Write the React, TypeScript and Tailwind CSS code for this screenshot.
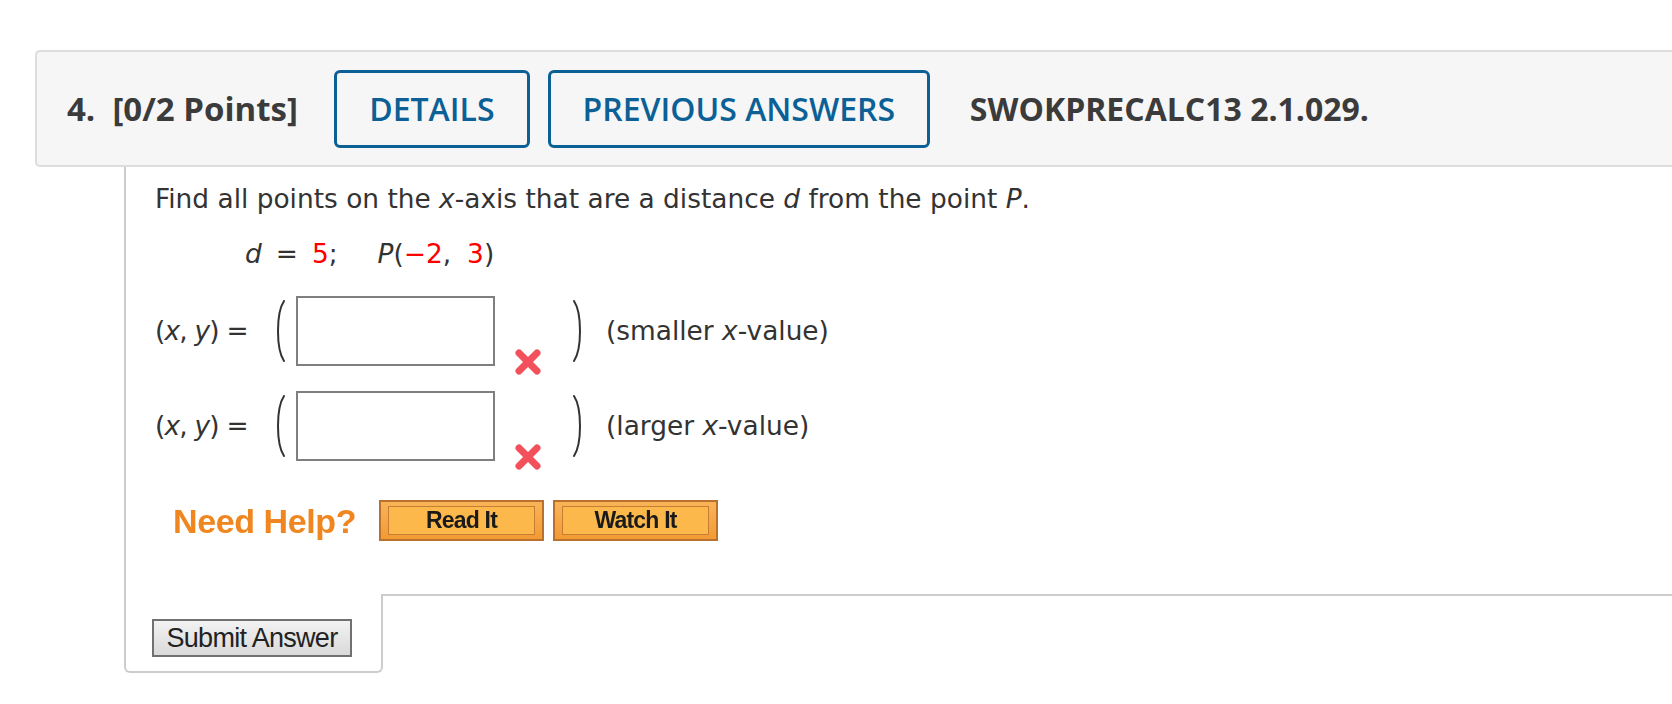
export default function App() {
  return (
    <div className="w-[1672px] h-[704px] bg-white overflow-hidden">
      <Header />
      <div className="ml-[124px]">
        <Question />
        <div className="flex">
          <div className="w-[259px] h-[79px] border-l-2 border-r-2 border-b-2 border-[#cccccc] rounded-b-[6px] pl-[26px] pt-[25px]">
            <button
              type="button"
              className="w-[200px] h-[38px] border-2 border-[#717171] bg-gradient-to-b from-[#f2f2f2] to-[#dadada] text-[27px] leading-none text-[#222222] [font-family:'Liberation_Sans',Arial,sans-serif] tracking-[-0.7px]"
            >
              Submit Answer
            </button>
          </div>
          <div className="flex-1 border-t-2 border-[#cccccc]" />
        </div>
      </div>
    </div>
  );
}

function Header() {
  return (
    <div className="mt-[50px] ml-[35px] h-[117px] bg-[#f6f6f6] border-2 border-r-0 border-[#dddddd] rounded-l-[5px] flex items-center pl-[30px] [font-family:'Open_Sans',sans-serif]">
      <div className="text-[33px] font-bold text-[#3b3b3b] whitespace-pre">4.  [0/2 Points]</div>
      <HeaderButton label="DETAILS" width="w-[196px]" className="ml-[36px]" />
      <HeaderButton label="PREVIOUS ANSWERS" width="w-[382px]" className="ml-[18px]" />
      <div className="ml-[40px] text-[32px] font-bold text-[#3b3b3b]">SWOKPRECALC13 2.1.029.</div>
    </div>
  );
}

function HeaderButton({ label, width, className }: { label: string; width: string; className: string }) {
  return (
    <div
      className={`${width} ${className} h-[78px] border-[3px] border-[#0b6096] rounded-[6px] flex items-center justify-center text-[32px] font-semibold text-[#0b6096]`}
    >
      {label}
    </div>
  );
}

function Paren({ right }: { right?: boolean }) {
  return (
    <svg width="13" height="62" viewBox="0 0 13 62" className="shrink-0">
      <path
        d={right ? 'M2 1 C 10 13, 10 49, 2 61' : 'M11 1 C 3 13, 3 49, 11 61'}
        fill="none"
        stroke="#333333"
        strokeWidth="2"
        strokeLinecap="round"
      />
    </svg>
  );
}

function WrongMark() {
  return (
    <svg width="28" height="26" viewBox="0 0 28 26" className="blur-[0.5px]">
      <path d="M5 4 L23 22 M23 4 L5 22" stroke="#f2505a" strokeWidth="7" strokeLinecap="round" />
    </svg>
  );
}

function AnswerRow({ label, className }: { label: string; className?: string }) {
  return (
    <div className={`flex items-center h-[70px] ${className ?? ''}`}>
      <span className="w-[118px] whitespace-pre tracking-[-0.8px]">
        (<i>x</i>, <i>y</i>) =
      </span>
      <Paren />
      <div className="ml-[10px] w-[199px] h-[70px] border-2 border-[#7f7f7f] bg-white" />
      <div className="w-[77px] h-[70px] flex items-end pl-[19px]">
        <div className="mb-[-9px]">
          <WrongMark />
        </div>
      </div>
      <Paren right />
      <span className="ml-[21px]">
        ({label} <i>x</i>-value)
      </span>
    </div>
  );
}

function OrangeButton({ label }: { label: string }) {
  return (
    <div className="w-[165px] h-[41px] border-2 border-[#b8722e] bg-gradient-to-b from-[#f9b458] to-[#f39a32] p-[4px_7px]">
      <div className="w-full h-full border border-[#c67d34] bg-[#fdb84b] flex items-center justify-center text-[23px] font-bold text-[#1a1a1a] [font-family:'Liberation_Sans',Arial,sans-serif] tracking-[-0.8px] blur-[0.3px]">
        {label}
      </div>
    </div>
  );
}

function Red({ children }: { children: React.ReactNode }) {
  return <span className="text-[#ff0000]">{children}</span>;
}

function Question() {
  return (
    <div className="border-l-2 border-[#cccccc] pl-[29px] pt-[17px] pb-[53px] text-[26.4px] text-[#333333] [font-family:'DejaVu_Sans',Verdana,sans-serif]">
      <div className="h-[30px] leading-[30px]">
        Find all points on the <i>x</i>-axis that are a distance <i>d</i> from the point <i>P</i>.
      </div>
      <div className="mt-[25px] h-[30px] leading-[30px] pl-[90px] whitespace-pre">
        <i>d</i>
        <span className="mx-[14px]">=</span>
        <Red>5</Red>;<span className="ml-[40px]" />
        <i>P</i>(<Red>−2</Red>,<span className="ml-[16px]" />
        <Red>3</Red>)
      </div>
      <AnswerRow label="smaller" className="mt-[27px]" />
      <AnswerRow label="larger" className="mt-[25px]" />
      <div className="mt-[39px] h-[41px] flex items-center pl-[18px]">
        <span className="w-[206px] text-[34px] leading-none font-bold text-[#f0861f] [font-family:'Liberation_Sans',Arial,sans-serif] blur-[0.4px] tracking-[-0.4px]">
          Need Help?
        </span>
        <OrangeButton label="Read It" />
        <div className="ml-[9px]">
          <OrangeButton label="Watch It" />
        </div>
      </div>
    </div>
  );
}
